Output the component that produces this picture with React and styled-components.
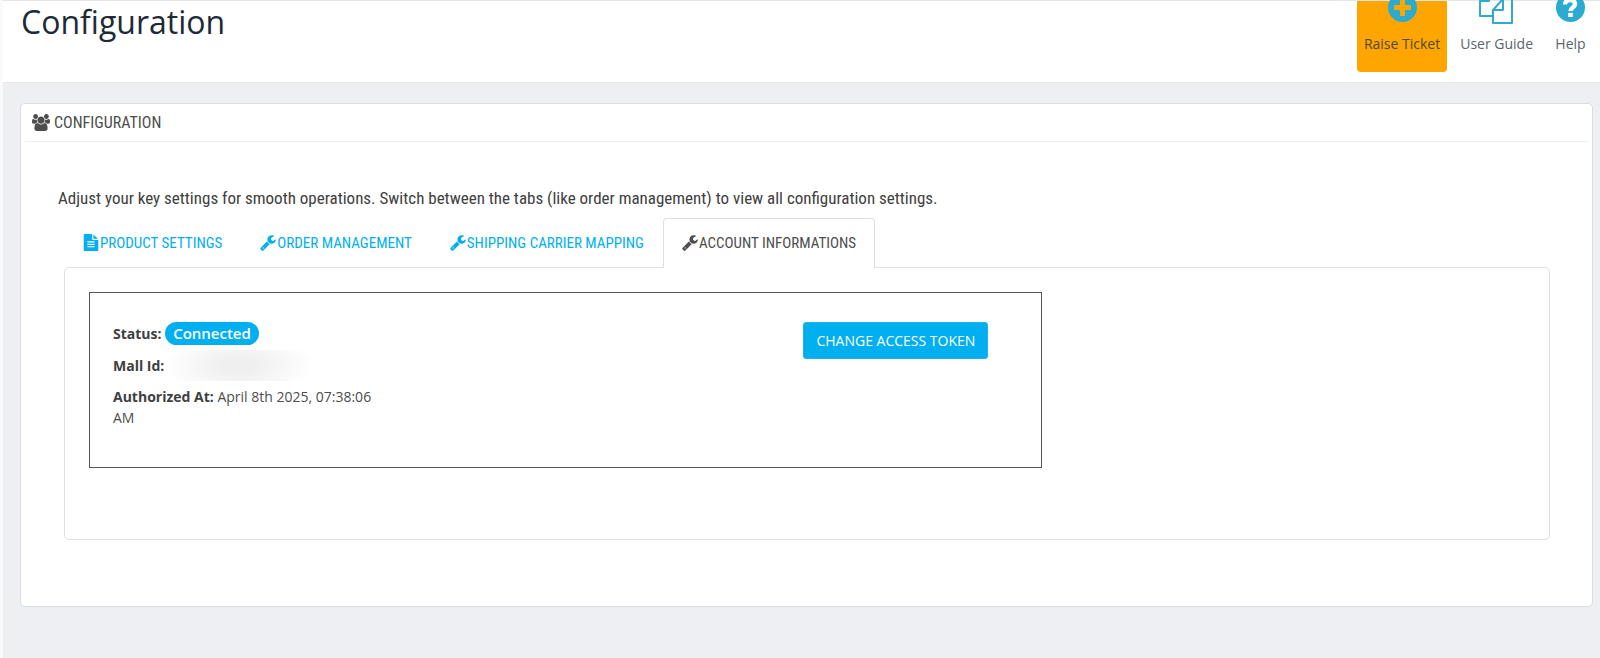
import React from "react";
import styled, { createGlobalStyle } from "styled-components";

const Global = createGlobalStyle`
  *, *::before, *::after { box-sizing: border-box; }
  html { min-height: 100%; background: #eeeff2; }
  body { margin: 0; font-family: "Open Sans", sans-serif; font-size: 14px; line-height: 21px; color: #4d4d4d; }
`;

const condensed = `font-family: "Ubuntu Condensed", "Roboto Condensed", "Open Sans Condensed", Roboto, sans-serif;`;

const Page = styled.div`
  min-height: 100vh;
  border-left: 3px solid #fafafa;
  background: #eeeff2;
`;

const Header = styled.header`
  display: flex;
  justify-content: space-between;
  height: 83px;
  padding: 0 5px 0 18px;
  background: #fff;
  border-top: 1px solid #e5e5e5;
  border-bottom: 1px solid #e6e6e6;
`;

const Title = styled.h1`
  margin: 0;
  font-size: 32px;
  line-height: 42px;
  font-weight: 400;
  color: #202a36;
`;

const Toolbar = styled.nav`
  display: flex;
  align-items: flex-end;
  gap: 6px;
  height: 71px;
`;

const ToolLink = styled.a`
  display: flex;
  flex-direction: column;
  align-items: center;
  justify-content: flex-end;
  height: 71px;
  padding: 0 7px 18px;
  border-radius: 0 0 4px 4px;
  color: ${(p) => (p.$accent ? "#4f4a3c" : "#5c6468")};
  text-decoration: none;
  background: ${(p) => (p.$accent ? "#ffa500" : "transparent")};
  svg { flex: none; color: #2caacf; margin-bottom: 8px; }
`;

const Card = styled.section`
  margin: 20px 7px 0 17px;
  padding: 0 4px 66px;
  border: 1px solid #d8dde2;
  border-radius: 5px;
  background: #fff;
`;

const CardHeading = styled.h2`
  display: flex;
  align-items: center;
  gap: 4px;
  margin: 0 0 44px;
  height: 38px;
  padding-left: 7px;
  border-bottom: 1px solid #eeeeee;
  ${condensed}
  font-size: 16px;
  font-weight: 400;
  text-transform: uppercase;
`;

const CardBody = styled.div`
  padding: 0 38px 0 33px;
`;

const Intro = styled.p`
  margin: 0 0 8px;
  ${condensed}
  font-size: 17px;
  line-height: 24px;
  color: #404040;
`;

const Tabs = styled.div`
  display: flex;
  padding-left: 6px;
`;

const Tab = styled.button`
  display: flex;
  align-items: center;
  gap: 1px;
  height: 50px;
  margin: 0 0 -1px;
  padding: 0 18px 2px;
  border: 1px solid ${(p) => (p.$active ? "#dfdfdf" : "transparent")};
  border-bottom: 0;
  border-radius: 4px 4px 0 0;
  background: ${(p) => (p.$active ? "#fff" : "transparent")};
  color: ${(p) => (p.$active ? "#4d4d4d" : "#00aff0")};
  ${condensed}
  font-size: 15px;
  text-transform: uppercase;
  white-space: nowrap;
`;

const TabPanel = styled.div`
  margin-left: 6px;
  padding: 24px 24px 71px;
  border: 1px solid #e0e0e0;
  border-radius: 5px;
  display: grid;
  grid-template-columns: 2fr 1fr;
  gap: 6px;
`;

const AccountBox = styled.div`
  display: flex;
  justify-content: space-between;
  align-items: flex-start;
  min-height: 176px;
  padding: 29px 53px 39px 23px;
  border: 1px solid #555;
`;

const Details = styled.dl`
  display: grid;
  gap: 10px;
  width: 280px;
  margin: 0;
`;

const Detail = styled.div`
  dt, dd { display: inline; margin: 0; }
  dt { font-weight: 700; color: #404040; }
`;

const Badge = styled.span`
  display: inline-block;
  padding: 0 8px;
  border-radius: 12px;
  font-size: 15px;
  line-height: 23px;
  background: #00aff0;
  color: #fff;
  font-weight: 600;
`;

const Redacted = styled.span`
  display: inline-block;
  width: 150px;
  height: 31px;
  margin: -5px 0;
  vertical-align: top;
  background: radial-gradient(ellipse 50% 110%, #efefef 20%, #fff);
`;

const Button = styled.button`
  height: 37px;
  padding: 0 12px;
  border: 1px solid #22b0e6;
  border-radius: 3px;
  background: #00aff0;
  color: #fff;
  font: 500 14px/21px "Open Sans", sans-serif;
  text-transform: uppercase;
`;

const shapes = {
  users: {
    box: "0 0 1920 1792",
    d: "M593 896q-162 5-265 128h-134q-82 0-138-40.5t-56-118.5q0-353 124-353 6 0 43.5 21t97.5 42.5 119 21.5q67 0 133-23-5 37-5 66 0 139 81 256zm1071 637q0 120-73 189.5t-194 69.5h-874q-121 0-194-69.5t-73-189.5q0-53 3.5-103.5t14-109 26.5-108.5 43-97.5 62-81 85.5-53.5 111.5-20q10 0 43 21.5t73 48 107 48 135 21.5 135-21.5 107-48 73-48 43-21.5q61 0 111.5 20t85.5 53.5 62 81 43 97.5 26.5 108.5 14 109 3.5 103.5zm-1024-1277q0 106-75 181t-181 75-181-75-75-181 75-181 181-75 181 75 75 181zm704 384q0 159-112.5 271.5t-271.5 112.5-271.5-112.5-112.5-271.5 112.5-271.5 271.5-112.5 271.5 112.5 112.5 271.5zm576 225q0 78-56 118.5t-138 40.5h-134q-103-123-265-128 81-117 81-256 0-29-5-66 66 23 133 23 59 0 119-21.5t97.5-42.5 43.5-21q124 0 124 353zm-128-609q0 106-75 181t-181 75-181-75-75-181 75-181 181-75 181 75 75 181z",
  },
  wrench: {
    box: "64 0 1664 1792",
    d: "M448 1472q0-26-19-45t-45-19-45 19-19 45 19 45 45 19 45-19 19-45zm644-420l-682 682q-37 37-90 37-52 0-91-37l-106-108q-38-36-38-90 0-53 38-91l681-681q39 98 114.5 173.5t173.5 114.5zm634-435q0 39-23 106-47 134-164.5 217.5t-258.5 83.5q-185 0-316.5-131.5t-131.5-316.5 131.5-316.5 316.5-131.5q58 0 121.5 16.5t107.5 46.5q16 11 16 28t-16 28l-293 169v224l193 107q5-3 79-48.5t135.5-81 70.5-35.5q15 0 23.5 10t8.5 25z",
  },
  file: {
    box: "128 0 1536 1792",
    d: "M1596 476q14 14 28 36h-472v-472q22 14 36 28zm-476 164h544v1056q0 40-28 68t-68 28h-1344q-40 0-68-28t-28-68v-1600q0-40 28-68t68-28h800v544q0 40 28 68t68 28zm160 736v-64q0-14-9-23t-23-9h-704q-14 0-23 9t-9 23v64q0 14 9 23t23 9h704q14 0 23-9t9-23zm0-256v-64q0-14-9-23t-23-9h-704q-14 0-23 9t-9 23v64q0 14 9 23t23 9h704q14 0 23-9t9-23zm0-256v-64q0-14-9-23t-23-9h-704q-14 0-23 9t-9 23v64q0 14 9 23t23 9h704q14 0 23-9t9-23z",
  },
};

function Glyph({ name, width, height }) {
  return (
    <svg width={width} height={height} viewBox={shapes[name].box} fill="currentColor" aria-hidden="true">
      <path d={shapes[name].d} />
    </svg>
  );
}

function PlusIcon() {
  return (
    <svg width="35" height="35" viewBox="0 0 35 35" aria-hidden="true">
      <circle cx="17.5" cy="17.5" r="14.5" fill="currentColor" />
      <path d="M17.5 9V26M9 17.5H26" stroke="#ffa500" strokeWidth="5" />
    </svg>
  );
}

function HelpIcon() {
  return (
    <svg width="35" height="35" viewBox="0 0 35 35" aria-hidden="true">
      <circle cx="17.5" cy="17.5" r="14.5" fill="currentColor" />
      <path d="M12 14.5C12 8.5 22 8.5 22 14C22 17.5 17.5 17.5 17.5 21" fill="none" stroke="#fff" strokeWidth="4.4" />
      <path d="M15.2 22.8H19.8V27H15.2Z" fill="#fff" />
    </svg>
  );
}

function GuideIcon() {
  return (
    <svg width="35" height="35" viewBox="0 0 35 35" fill="none" stroke="currentColor" strokeWidth="2" strokeLinejoin="round" aria-hidden="true">
      <path d="M13 26H1V11L10 3H21V10M10 3V11H1" />
      <path d="M14 20L24 9H33V33H14ZM24 9V20H14" />
    </svg>
  );
}

const tabs = [
  { label: "Product Settings", icon: "file" },
  { label: "Order Management", icon: "wrench" },
  { label: "Shipping Carrier Mapping", icon: "wrench" },
  { label: "Account Informations", icon: "wrench", active: true },
];

export default function App() {
  return (
    <Page>
      <Global />
      <Header>
        <Title>Configuration</Title>
        <Toolbar>
          <ToolLink href="#ticket" $accent><PlusIcon />Raise Ticket</ToolLink>
          <ToolLink href="#guide"><GuideIcon />User Guide</ToolLink>
          <ToolLink href="#help"><HelpIcon />Help</ToolLink>
        </Toolbar>
      </Header>
      <main>
        <Card>
          <CardHeading><Glyph name="users" width={18} height={17} />Configuration</CardHeading>
          <CardBody>
            <Intro>
              Adjust your key settings for smooth operations. Switch between the tabs (like order management) to view all configuration settings.
            </Intro>
            <Tabs role="tablist">
              {tabs.map((t) => (
                <Tab key={t.label} type="button" role="tab" aria-selected={!!t.active} $active={t.active}>
                  <Glyph name={t.icon} width={16} height={17} />
                  {t.label}
                </Tab>
              ))}
            </Tabs>
            <TabPanel role="tabpanel">
              <AccountBox>
                <Details>
                  <Detail><dt>Status:</dt>{" "}<dd><Badge>Connected</Badge></dd></Detail>
                  <Detail><dt>Mall Id:</dt><dd><Redacted /></dd></Detail>
                  <Detail><dt>Authorized At:</dt>{" "}<dd>April 8th 2025, 07:38:06 AM</dd></Detail>
                </Details>
                <Button type="button">Change Access Token</Button>
              </AccountBox>
            </TabPanel>
          </CardBody>
        </Card>
      </main>
    </Page>
  );
}
